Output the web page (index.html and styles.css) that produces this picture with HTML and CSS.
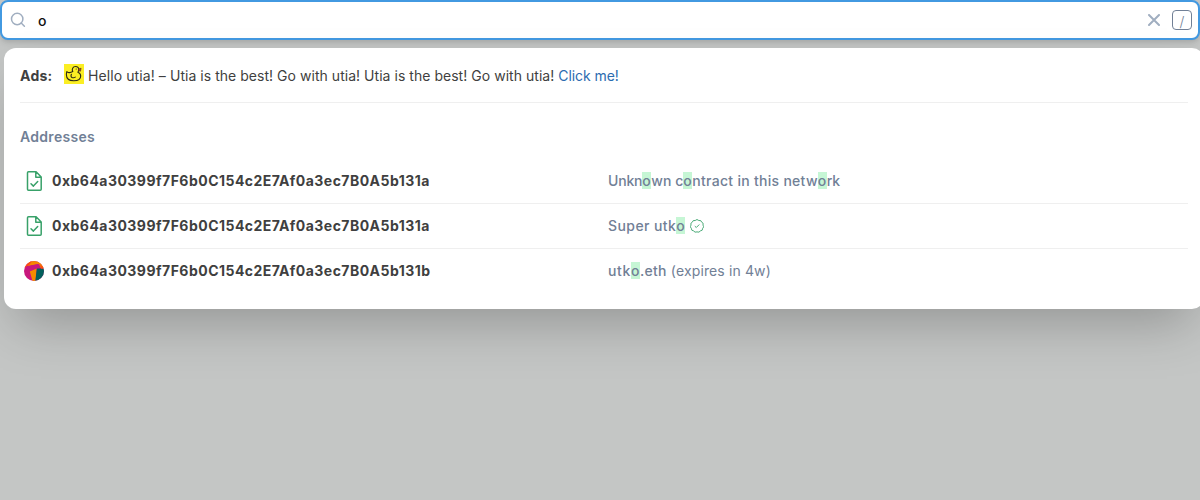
FILE: index.html
```html
<!DOCTYPE html>
<html lang="en">
<head>
<meta charset="utf-8">
<title>Search</title>
<link rel="stylesheet" href="styles.css">
</head>
<body>
<form class="search">
  <svg class="search-icon" viewBox="0 0 16 16"><circle cx="7.200" cy="7" r="5.700"/><path d="m11.200 11 3.200 3.200"/></svg>
  <span class="query">o</span>
  <svg class="clear" viewBox="0 0 12 12"><path d="M1 1 11 11M11 1 1 11"/></svg>
  <span class="key">/</span>
</form>
<main class="panel">
  <div class="ad">
    <strong>Ads:</strong>
    <svg class="duck" viewBox="0 0 20 20"><rect width="20" height="20" fill="#fbee23"/><g fill="none" stroke="#2b2815" stroke-width="1.1" stroke-linejoin="round" stroke-linecap="round"><path d="M8.800 7.600C7.400 5.300 8.900 2.500 11.500 2.500c2 0 3.300 1.400 3.300 3.100 0 1.200-.5 2-.9 2.700 1.800.8 2.800 2 2.800 3.700 0 3-2.900 4.800-6.900 4.800-4.600 0-7.400-2.400-7.400-6 0-1.200 0-2.200.4-3.200 1.500 1.300 3.900 1.200 6 0Z"/><path d="M7.400 10.300c-.7 1.500-.4 2.700.7 3.200 1.200.5 2.400.2 3.200-.4"/></g><path d="m14.500 5 2.600-.8-.6 3-1.900-.5Z" fill="#bc3d22" stroke="#47301b" stroke-width=".6"/><circle cx="12.200" cy="5" r=".6" fill="#2b2815"/></svg>
    <span><span class="greeting">Hello utia! – </span><span class="message">Utia is the best! Go with utia! Utia is the best! Go with utia! </span><a class="link">Click me!</a></span>
  </div>
  <h2 class="heading">Addresses</h2>
  <div class="row">
    <div class="address"><svg class="contract" viewBox="0 0 20 20"><path d="M4.500 .8h7.600L17.200 6V18.200a1 1 0 0 1-1 1H4.500a1 1 0 0 1-1-1V1.800a1 1 0 0 1 1-1ZM11.800 .8V6.300H17.200M7 12.700l2.400 2.400 4.300-4.600"/></svg>0xb64a30399f7F6b0C154c2E7Af0a3ec7B0A5b131a</div>
    <div class="name"><span class="tight">Unkn</span><mark>o</mark><span class="normal">wn c</span><mark>o</mark><span class="wide">ntract in this netw</span><mark>o</mark><span class="tight">rk</span></div>
  </div>
  <div class="row">
    <div class="address"><svg class="contract" viewBox="0 0 20 20"><path d="M4.500 .8h7.600L17.200 6V18.200a1 1 0 0 1-1 1H4.500a1 1 0 0 1-1-1V1.800a1 1 0 0 1 1-1ZM11.800 .8V6.300H17.200M7 12.700l2.400 2.400 4.300-4.600"/></svg>0xb64a30399f7F6b0C154c2E7Af0a3ec7B0A5b131a</div>
    <div class="name"><span class="wider">Super utk</span><mark>o</mark><svg class="verified" viewBox="0 0 14 14"><path d="M5.200 1.500Q7-.5 8.800 1.500Q11.300.900 11.700 3.200Q13.900 3.900 13 6.100Q14.600 7.900 12.700 9.300Q12.800 11.800 10.400 11.900Q9.200 13.900 7 12.900Q4.800 13.900 3.600 11.900Q1.200 11.800 1.300 9.300Q-.6 7.900 1 6.100Q.1 3.900 2.300 3.200Q2.700.900 5.200 1.500ZM4.800 7.100l1.500 1.400 3-3"/></svg></div>
  </div>
  <div class="row">
    <div class="address"><svg class="avatar" viewBox="0 0 20 20"><defs><clipPath id="avatar-clip"><circle cx="10" cy="10" r="10"/></clipPath></defs><g clip-path="url(#avatar-clip)"><path fill="#c8177d" d="M0 0h20v20H0Z"/><path fill="#f58700" d="M5-1h16v8H14V3L4 5Z"/><path fill="#fb4f12" d="M0 0h8L6 3 1.500 6.500H0Z"/><path fill="#c8177d" d="m2 5.500 13-2.500 2 4.500L6 11Z"/><path fill="#f58b00" d="m5.800 10.500 7-3L11.500 20H8.500Z"/><path fill="#03605c" d="M12.800 7.500H21V21h-9.800Z"/><path fill="#fb4f12" d="m16 3.500 5 4-4 .2Z"/></g></svg>0xb64a30399f7F6b0C154c2E7Af0a3ec7B0A5b131b</div>
    <div class="name"><span class="widest">utk</span><mark>o</mark><span class="wide">.eth&nbsp;</span><span class="expiry">(expires in 4w)</span></div>
  </div>
</main>
</body>
</html>
```
FILE: styles.css
```css
* { box-sizing: border-box; }
body {
  margin: 0;
  height: 500px;
  overflow: hidden;
  background: #c4c6c5;
  color: #3f3f40;
  font: 14px/20px Inter, sans-serif;
}
svg { flex: none; }
.search {
  display: flex;
  align-items: center;
  width: 1200px;
  height: 40px;
  padding: 0 6px 0 8px;
  border: 2px solid #4299e1;
  border-radius: 8px;
  background: #fff;
  box-shadow: 0 4px 6px -1px rgba(0, 0, 0, .1), 0 2px 4px -1px rgba(0, 0, 0, .06);
}
.search-icon { width: 16px; height: 16px; fill: none; stroke: #a0aec0; stroke-width: 1.5; stroke-linecap: round; }
.query { flex: 1; margin: 2px 0 0 12px; color: #101112; font-weight: 500; }
.clear { width: 12px; height: 12px; margin-right: 12px; fill: none; stroke: #a0aec0; stroke-width: 2; stroke-linecap: round; }
.key {
  width: 20px;
  height: 20px;
  border: 1px solid #718096;
  border-radius: 4px;
  color: #718096;
  font-weight: 300;
  line-height: 21px;
  text-align: center;
}
.panel {
  width: 1200px;
  height: 261px;
  margin: 8px 0 0 4px;
  padding: 16px;
  border-radius: 12px;
  background: #fff;
  box-shadow: 0 25px 50px -12px rgba(0, 0, 0, .25);
}
.ad { display: flex; height: 39px; padding-top: 2px; border-bottom: 1px solid #efefef; }
.ad strong { width: 44px; font-weight: 700; letter-spacing: .25px; }
.duck { width: 20px; height: 20px; margin: -2px 4px 0 0; }
.greeting { letter-spacing: .09px; }
.message { letter-spacing: .035px; }
.link { color: #2b6cb0; letter-spacing: -.06px; }
.heading { margin: 24px 0 12px; color: #718096; font-size: 14px; font-weight: 600; line-height: 20px; letter-spacing: .3px; }
.row { display: grid; grid-template-columns: 588px 1fr; height: 45px; padding-top: 12px; border-bottom: 1px solid #efefef; }
.row:last-child { border: 0; }
.address, .name { display: flex; align-items: flex-start; }
.address { font-weight: 700; letter-spacing: .475px; }
.address svg { width: 20px; height: 20px; margin: 0 8px 0 4px; }
.contract { fill: none; stroke: #38a169; stroke-width: 1.5; stroke-linejoin: round; stroke-linecap: round; }
.name { color: #718096; font-weight: 500; white-space: pre; }
.tight { letter-spacing: -.2px; }
.normal { letter-spacing: .05px; }
.wide { letter-spacing: .29px; }
.wider { letter-spacing: .42px; }
.widest { letter-spacing: .65px; }
.expiry { font-weight: 400; letter-spacing: .13px; }
mark { width: 9px; height: 17px; margin-top: 1px; line-height: 18px; background: #c6f6d5; color: inherit; }
.verified { width: 14px; height: 14px; margin: 3px 0 0 5px; fill: none; stroke: #38a169; stroke-width: .9; stroke-linejoin: round; }
```
